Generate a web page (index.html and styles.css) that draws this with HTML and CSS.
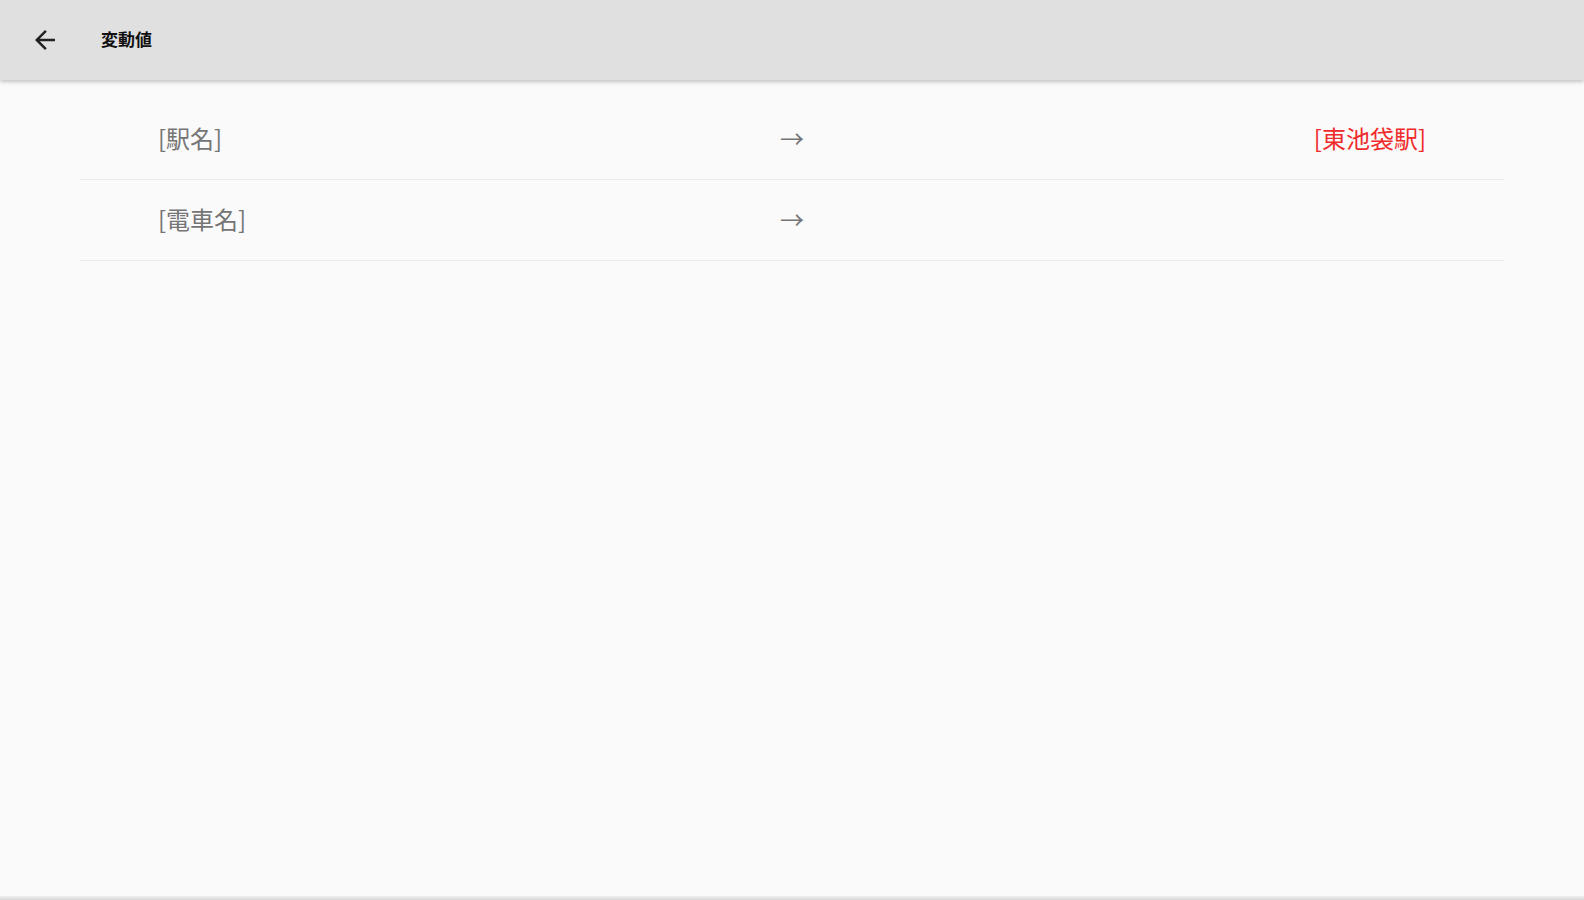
FILE: index.html
```html
<!DOCTYPE html>
<html lang="ja">
<head>
<meta charset="utf-8">
<title>変動値</title>
<link rel="stylesheet" href="styles.css">
</head>
<body>
<div class="app">
  <header class="toolbar">
    <button class="back" aria-label="戻る">
      <svg viewBox="0 0 24 24" width="30" height="30"><path d="M20 11H7.83l5.59-5.59L12 4l-8 8 8 8 1.41-1.41L7.83 13H20v-2z" fill="#212121"/></svg>
    </button>
    <h1 class="title">変動値</h1>
  </header>
  <main class="content">
    <ul class="list">
      <li class="row">
        <span class="key">[駅名]</span>
        <span class="arrow">→</span>
        <span class="value">[東池袋駅]</span>
      </li>
      <li class="row">
        <span class="key">[電車名]</span>
        <span class="arrow">→</span>
        <span class="value"></span>
      </li>
    </ul>
  </main>
  <div class="bottom-edge"></div>
</div>
</body>
</html>
```

FILE: styles.css
```css
* { box-sizing: border-box; }
html, body { margin: 0; padding: 0; height: 100%; }
body {
  background: #fafafa;
  font-family: "Noto Sans CJK JP", "Noto Sans", Roboto, sans-serif;
}
.app {
  display: flex;
  flex-direction: column;
  height: 100vh;
}
.toolbar {
  height: 80px;
  flex: none;
  background: #e0e0e0;
  display: flex;
  align-items: center;
  padding-left: 30px;
  box-shadow: 0 2px 4px rgba(0,0,0,0.22);
  position: relative;
  z-index: 1;
}
.back {
  border: 0;
  background: none;
  padding: 0;
  width: 30px;
  height: 30px;
  display: flex;
}
.title {
  margin: 0 0 3px 41px;
  font-size: 17px;
  font-weight: 700;
  color: #111;
  line-height: 1;
}
.content {
  flex: 1;
  padding: 19px 80px 0;
}
.list {
  list-style: none;
  margin: 0;
  padding: 0;
}
.row {
  display: grid;
  grid-template-columns: 1fr auto 1fr;
  align-items: center;
  height: 81px;
  padding: 0 78px 4px 78px;
  border-bottom: 1px solid #ececec;
  font-size: 24px;
  color: #757575;
}
.key { justify-self: start; }
.arrow { justify-self: center; color: #757575; }
.value { justify-self: end; color: #f02b2b; }
.bottom-edge {
  height: 4px;
  flex: none;
  background: linear-gradient(#f0f0f0, #d6d6d6);
}
```
